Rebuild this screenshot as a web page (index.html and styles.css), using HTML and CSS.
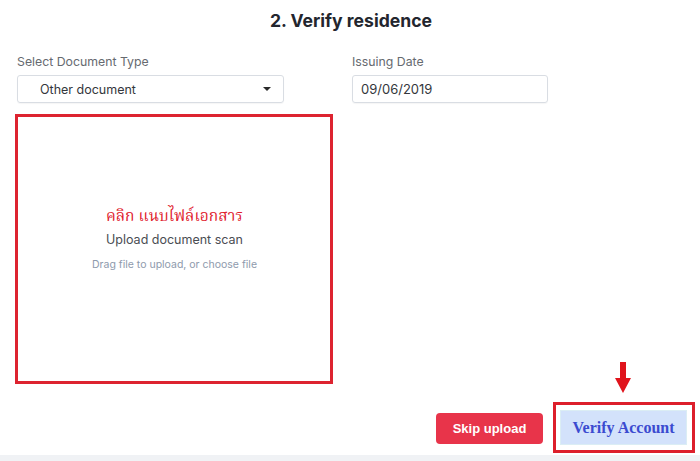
FILE: index.html
```html
<!DOCTYPE html>
<html lang="en">
<head>
<meta charset="utf-8">
<title>Verify residence</title>
<link rel="stylesheet" href="styles.css">
</head>
<body>
<div class="page">
  <h1 class="title">2. Verify residence</h1>
  <div class="fields">
    <div class="field field-type">
      <label class="label">Select Document Type</label>
      <div class="input select">
        <span>Other document</span>
        <span class="caret"></span>
      </div>
    </div>
    <div class="field field-date">
      <label class="label">Issuing Date</label>
      <div class="input date">09/06/2019</div>
    </div>
  </div>
  <div class="main">
    <div class="dropzone">
      <div class="thai">คลิก แนบไฟล์เอกสาร</div>
      <div class="upload-title">Upload document scan</div>
      <div class="upload-hint">Drag file to upload, or choose file</div>
    </div>
    <div class="actions">
      <div class="arrow-wrap">
        <svg class="arrow" width="16" height="31" viewBox="0 0 16 31">
          <rect x="5" y="0" width="6" height="17" fill="#e0141c"/>
          <polygon points="0,16 16,16 8,31" fill="#e0141c"/>
        </svg>
      </div>
      <div class="buttons">
        <button class="btn-skip">Skip upload</button>
        <div class="verify-box">
          <button class="btn-verify">Verify Account</button>
        </div>
      </div>
    </div>
  </div>
</div>
<div class="strip"></div>
</body>
</html>
```

FILE: styles.css
```css
* { box-sizing: border-box; }
html, body { margin: 0; padding: 0; background: #ffffff; }
body {
  font-family: Inter, "Noto Sans", sans-serif;
  width: 700px;
  height: 461px;
  overflow: hidden;
}
.page {
  padding: 11px 5px 0 17px;
  height: 455px;
}
.title {
  margin: 0;
  font-size: 17.6px;
  line-height: 20px;
  font-weight: 700;
  color: #23262e;
  text-align: center;
  padding-right: 10px;
}
.fields {
  display: flex;
  gap: 68px;
  margin-top: 23px;
}
.field { display: flex; flex-direction: column; }
.field-type { width: 267px; }
.field-date { width: 196px; }
.label {
  font-size: 12.3px;
  line-height: 16px;
  color: #666a70;
  margin-bottom: 5px;
}
.input {
  height: 28px;
  border: 1px solid #d9dde3;
  border-radius: 3px;
  font-size: 13px;
  color: #34373c;
  display: flex;
  align-items: center;
  box-shadow: 0 1px 1px rgba(0,0,0,0.04);
}
.select {
  padding: 0 12px 0 22px;
  justify-content: space-between;
  font-size: 12.5px;
}
.caret {
  width: 0;
  height: 0;
  border-left: 4px solid transparent;
  border-right: 4px solid transparent;
  border-top: 4px solid #2a2a2a;
}
.date { padding-left: 8px; }
.main {
  display: flex;
  justify-content: space-between;
  margin-top: 11px;
  margin-left: -2px;
}
.dropzone {
  width: 318px;
  height: 270px;
  border: 3px solid #dd2330;
  display: flex;
  flex-direction: column;
  align-items: center;
  justify-content: center;
  padding-bottom: 20px;
  padding-left: 1px;
}
.thai {
  font-family: "Noto Serif Thai", Tahoma, "Noto Sans Thai", Garuda, Loma, serif;
  color: #e0202c;
  font-size: 15.5px;
  line-height: 22px;
}
.upload-title {
  margin-top: 4px;
  font-size: 12.5px;
  line-height: 16px;
  color: #4a4d53;
}
.upload-hint {
  margin-top: 10px;
  font-size: 10.5px;
  line-height: 14px;
  color: #8e9aac;
}
.actions {
  align-self: flex-end;
  display: flex;
  flex-direction: column;
  align-items: flex-end;
  margin-top: 248px;
}
.arrow-wrap {
  width: 142px;
  display: flex;
  justify-content: center;
  padding-right: 3px;
  margin-bottom: 9px;
}
.arrow { display: block; }
.buttons {
  display: flex;
  align-items: center;
  gap: 10px;
}
.btn-skip {
  width: 107px;
  height: 31px;
  border: none;
  border-radius: 4px;
  background: #e8344a;
  color: #ffffff;
  font-family: "Liberation Sans", Arial, sans-serif;
  font-weight: 700;
  font-size: 13px;
  padding: 0;
  margin-top: 1px;
}
.verify-box {
  width: 142px;
  height: 51px;
  border: 3px solid #dd1f2b;
  padding: 5px 5px 5px 4px;
}
.btn-verify {
  width: 127px;
  height: 35px;
  background: #d3e2fb;
  border: 1px solid #dbedf4;
  color: #3b4bd0;
  font-family: "Liberation Serif", "Times New Roman", serif;
  font-weight: 700;
  font-size: 16px;
  padding: 0;
}
.strip {
  height: 6px;
  background: #f0f2f5;
}
```
